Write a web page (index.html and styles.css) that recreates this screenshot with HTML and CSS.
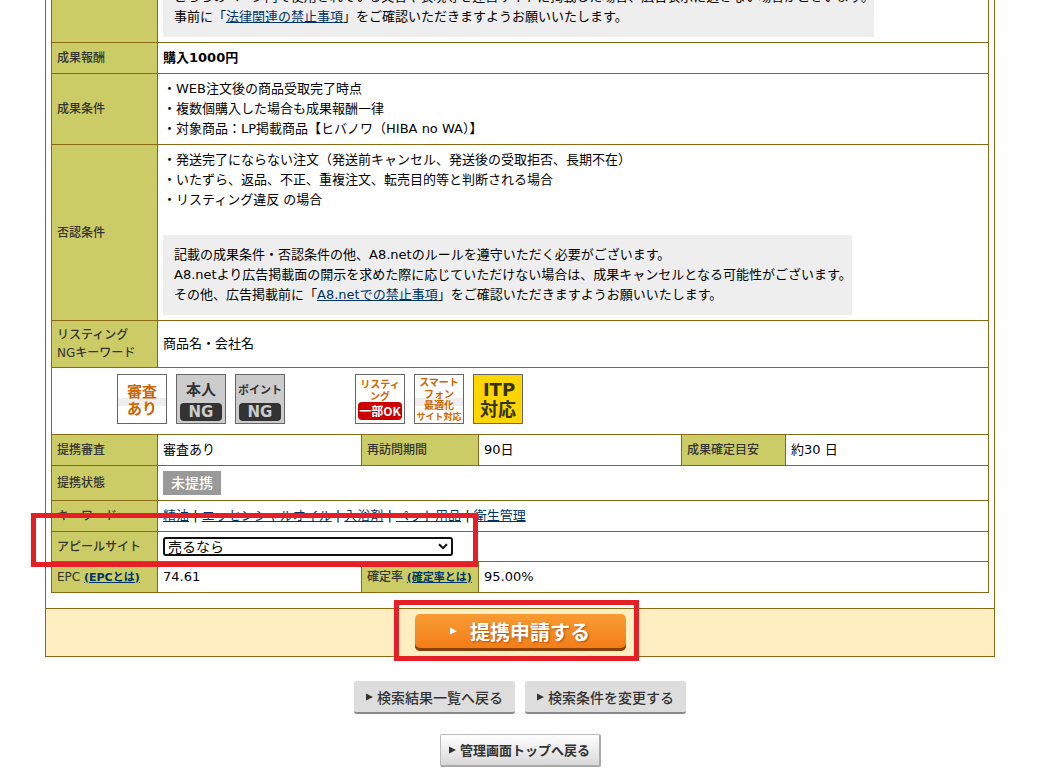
FILE: index.html
```html
<!DOCTYPE html>
<html lang="ja">
<head>
    <meta charset="UTF-8">
    <meta name="viewport" content="width=device-width, initial-scale=1.0">
    <title>プログラム詳細</title>
    <link rel="stylesheet" href="styles.css">
</head>
<body>
    <main class="container">
        <form class="program">
            <div class="program-body">
                <table class="detail">
                    <colgroup>
                        <col class="col-label">
                        <col class="col-value">
                        <col class="col-label-mid">
                        <col>
                        <col class="col-label-end">
                        <col>
                    </colgroup>
                    <tbody>
                        <tr>
                            <th></th>
                            <td colspan="5">
                                <p class="note">こちらのページ内で使用されている文言や表現等を運営サイトに掲載した場合、広告表示に適さない場合がございます。<br>
                                事前に「<a href="#">法律関連の禁止事項</a>」をご確認いただきますようお願いいたします。</p>
                            </td>
                        </tr>
                        <tr>
                            <th>成果報酬</th>
                            <td colspan="5"><strong>購入1000円</strong></td>
                        </tr>
                        <tr>
                            <th>成果条件</th>
                            <td colspan="5">
                                ・WEB注文後の商品受取完了時点<br>
                                ・複数個購入した場合も成果報酬一律<br>
                                ・対象商品：LP掲載商品【ヒバノワ（HIBA no WA）】
                            </td>
                        </tr>
                        <tr>
                            <th>否認条件</th>
                            <td colspan="5">
                                ・発送完了にならない注文（発送前キャンセル、発送後の受取拒否、長期不在）<br>
                                ・いたずら、返品、不正、重複注文、転売目的等と判断される場合<br>
                                ・リスティング違反 の場合
                                <p class="note note-below">記載の成果条件・否認条件の他、A8.netのルールを遵守いただく必要がございます。<br>
                                A8.netより広告掲載面の開示を求めた際に応じていただけない場合は、成果キャンセルとなる可能性がございます。<br>
                                その他、広告掲載前に「<a href="#">A8.netでの禁止事項</a>」をご確認いただきますようお願いいたします。</p>
                            </td>
                        </tr>
                        <tr>
                            <th>リスティング<br>NGキーワード</th>
                            <td colspan="5">商品名・会社名</td>
                        </tr>
                        <tr>
                            <td colspan="6" class="marks">
                                <div class="mark-list">
                                    <svg class="mark mark-orange" viewBox="0 0 50 50">
                                        <rect class="mark-frame" x="0.5" y="0.5" width="49" height="49"/>
                                        <rect class="mark-shade" x="1" y="24" width="48" height="8"/>
                                        <text class="t15" x="25" y="23">審査</text>
                                        <text class="t15" x="25" y="40">あり</text>
                                    </svg>
                                    <svg class="mark mark-gray" viewBox="0 0 50 50">
                                        <rect class="mark-frame" x="0.5" y="0.5" width="49" height="49"/>
                                        <text class="t15" x="25" y="21">本人</text>
                                        <rect class="mark-plate" x="4" y="29" width="42" height="18" rx="4"/>
                                        <text class="ng" x="25" y="43">NG</text>
                                    </svg>
                                    <svg class="mark mark-gray" viewBox="0 0 50 50">
                                        <rect class="mark-frame" x="0.5" y="0.5" width="49" height="49"/>
                                        <text class="t11" x="25" y="20">ポイント</text>
                                        <rect class="mark-plate" x="4" y="29" width="42" height="18" rx="4"/>
                                        <text class="ng" x="25" y="43">NG</text>
                                    </svg>
                                    <svg class="mark mark-orange mark-second" viewBox="0 0 50 50">
                                        <rect class="mark-frame" x="0.5" y="0.5" width="49" height="49"/>
                                        <text class="t10" x="25" y="14">リスティ</text>
                                        <text class="t10" x="25" y="26">ング</text>
                                        <rect class="mark-red" x="3" y="28" width="44" height="18" rx="4"/>
                                        <text class="ok" x="25" y="42">一部OK</text>
                                    </svg>
                                    <svg class="mark mark-orange" viewBox="0 0 50 50">
                                        <rect class="mark-frame" x="0.5" y="0.5" width="49" height="49"/>
                                        <rect class="mark-shade" x="1" y="24" width="48" height="8"/>
                                        <text class="t10" x="25" y="12">スマート</text>
                                        <text class="t10" x="25" y="24">フォン</text>
                                        <text class="t10" x="25" y="35">最適化</text>
                                        <text class="t9" x="25" y="46">サイト対応</text>
                                    </svg>
                                    <svg class="mark mark-yellow" viewBox="0 0 50 50">
                                        <rect class="mark-frame" x="0.5" y="0.5" width="49" height="49"/>
                                        <text class="itp" x="26" y="22">ITP</text>
                                        <text class="t18" x="25" y="42">対応</text>
                                    </svg>
                                </div>
                            </td>
                        </tr>
                        <tr>
                            <th>提携審査</th>
                            <td>審査あり</td>
                            <th>再訪問期間</th>
                            <td>90日</td>
                            <th>成果確定目安</th>
                            <td>約30 日</td>
                        </tr>
                        <tr>
                            <th>提携状態</th>
                            <td colspan="5"><span class="status">未提携</span></td>
                        </tr>
                        <tr>
                            <th>キーワード</th>
                            <td colspan="5"><a href="#">精油</a> | <a href="#">エッセンシャルオイル</a> | <a href="#">入浴剤</a> | <a href="#">ペット用品</a> | <a href="#">衛生管理</a></td>
                        </tr>
                        <tr>
                            <th><label for="appeal-site">アピールサイト</label></th>
                            <td colspan="5">
                                <div class="site-select">
                                    <select id="appeal-site">
                                        <option>売るなら</option>
                                    </select>
                                    <svg class="chevron" viewBox="0 0 10 7"><path d="M1 1.2 5 5.2 9 1.2"/></svg>
                                    <span class="marker marker-site"></span>
                                </div>
                            </td>
                        </tr>
                        <tr>
                            <th>EPC <a class="help" href="#">(EPCとは)</a></th>
                            <td>74.61</td>
                            <th>確定率 <a class="help" href="#">(確定率とは)</a></th>
                            <td colspan="3">95.00%</td>
                        </tr>
                    </tbody>
                </table>
            </div>
            <div class="apply-bar">
                <div class="apply">
                    <button type="button" class="apply-btn">
                        <svg class="arrow" viewBox="0 0 8 8"><path d="M0 0 8 4 0 8z"/></svg>提携申請する
                    </button>
                    <span class="marker marker-apply"></span>
                </div>
            </div>
        </form>
        <nav class="back-nav">
            <a class="back-btn" href="#"><svg class="arrow" viewBox="0 0 8 8"><path d="M0 0 8 4 0 8z"/></svg>検索結果一覧へ戻る</a>
            <a class="back-btn" href="#"><svg class="arrow" viewBox="0 0 8 8"><path d="M0 0 8 4 0 8z"/></svg>検索条件を変更する</a>
        </nav>
        <nav class="top-nav">
            <a class="top-btn" href="#"><svg class="arrow" viewBox="0 0 8 8"><path d="M0 0 8 4 0 8z"/></svg>管理画面トップへ戻る</a>
        </nav>
    </main>
</body>
</html>
```
FILE: styles.css
```css
body {
    margin: 0;
    padding: 0;
    font-family: "DejaVu Sans", "Noto Sans CJK JP", sans-serif;
    font-size: 13px;
    line-height: 20px;
    color: #000;
    background-color: #fff;
    overflow: hidden;
}

a {
    color: #003366;
}

/* the page is scrolled down to the lower half of the detail table */
.container {
    margin: -35px 44px 0 45px;
}

.program {
    border: 1px solid #8a6914;
}

.program-body {
    padding: 5px 5px 15px;
}

.detail {
    width: 100%;
    table-layout: fixed;
    border-collapse: collapse;
}

.col-label {
    width: 106px;
}

.col-value {
    width: 204px;
}

.col-label-mid {
    width: 117px;
}

.col-label-end {
    width: 104px;
}

.detail th,
.detail td {
    padding: 5px;
    border: 1px solid #8a6914;
    text-align: left;
    vertical-align: middle;
}

.detail th {
    background-color: #cccc66;
    color: #333;
    font-size: 12px;
    font-weight: 500;
    line-height: 18px;
    white-space: nowrap;
}

.note {
    width: fit-content;
    margin: 0;
    padding: 10px 0 10px 11px;
    background-color: #eee;
    white-space: nowrap;
}

.note-below {
    margin-top: 25px;
}

.help {
    font-size: 11px;
    font-weight: bold;
}

.detail .marks {
    padding: 6px 5px 10px 65px;
}

.mark-list {
    display: flex;
    gap: 9px;
}

.mark {
    display: block;
    width: 50px;
    height: 50px;
    font-family: "Noto Sans CJK JP", sans-serif;
    font-weight: bold;
    text-anchor: middle;
}

.mark-second {
    margin-left: 61px;
}

.mark-frame {
    fill: #fff;
    stroke: #666;
}

.mark-shade {
    fill: #eee;
}

.mark-orange {
    fill: #cc6600;
}

.mark-gray {
    fill: #333;
}

.mark-gray .mark-frame {
    fill: #ccc;
}

.mark-yellow {
    fill: #333300;
}

.mark-yellow .mark-frame {
    fill: #ffd500;
}

.mark-plate {
    fill: #333;
}

.mark-red {
    fill: #cc0000;
}

.t9 {
    font-size: 9px;
}

.t10 {
    font-size: 10px;
}

.t11 {
    font-size: 11px;
}

.t15 {
    font-size: 15px;
}

.t18 {
    font-size: 18px;
}

.ng {
    font-size: 15px;
    font-family: "DejaVu Sans", sans-serif;
    fill: #ccc;
}

.ok {
    font-size: 12px;
    fill: #fff;
}

.itp {
    font-size: 18px;
    font-family: "DejaVu Sans", sans-serif;
}

.status {
    display: block;
    width: fit-content;
    padding: 2px 8px;
    background-color: #999;
    color: #fff;
    font-size: 14px;
    font-weight: 500;
}

.site-select {
    position: relative;
    width: 290px;
}

.site-select select {
    display: block;
    box-sizing: border-box;
    width: 100%;
    height: 19px;
    padding: 0 20px 0 3px;
    border: 2px solid #101010;
    border-radius: 3px;
    background-color: #fff;
    color: #000;
    font-family: "Noto Sans CJK JP", sans-serif;
    font-size: 14px;
    line-height: 15px;
    appearance: none;
}

.chevron {
    position: absolute;
    top: 6px;
    right: 5px;
    width: 10px;
    height: 7px;
    fill: none;
    stroke: #101010;
    stroke-width: 2;
    pointer-events: none;
}

/* red frames around the two places to operate */
.marker {
    position: absolute;
    border: 5px solid #e61e25;
    pointer-events: none;
}

.marker-site {
    top: -24px;
    right: -25px;
    bottom: -11px;
    left: -132px;
}

.marker-apply {
    top: -14px;
    right: -13px;
    bottom: -10px;
    left: -21px;
}

.apply-bar {
    display: flex;
    justify-content: center;
    padding: 5px 0;
    border-top: 1px solid #8a6914;
    background-color: #ffeec1;
}

.apply {
    position: relative;
}

.arrow {
    width: 7px;
    height: 8px;
    fill: currentColor;
}

.apply-btn {
    display: flex;
    align-items: center;
    justify-content: center;
    gap: 13px;
    width: 211px;
    height: 37px;
    padding: 0 0 3px;
    border: none;
    border-radius: 5px;
    background: linear-gradient(#f79c32, #f47b16);
    box-shadow: inset 0 -3px 0 #8a3f06;
    color: #fff;
    font-family: "Noto Sans CJK JP", sans-serif;
    font-size: 20px;
    font-weight: bold;
    text-shadow: 1px 1px 2px #a85510;
    cursor: pointer;
}

.back-nav,
.top-nav {
    display: flex;
    justify-content: center;
    gap: 10px;
    font-family: "Noto Sans CJK JP", sans-serif;
}

.back-nav {
    margin-top: 24px;
}

.top-nav {
    margin-top: 20px;
}

.back-btn,
.top-btn {
    display: flex;
    align-items: center;
    justify-content: center;
    gap: 4px;
    box-sizing: border-box;
    width: 161px;
    height: 33px;
    color: #333;
    text-decoration: none;
}

.back-btn {
    border-bottom: 2px solid #888;
    border-radius: 3px;
    background-color: #ddd;
    font-size: 14px;
    font-weight: 500;
}

.top-btn {
    border: 1px solid #bbb;
    border-right: 2px solid #aaa;
    border-bottom: 2px solid #aaa;
    border-radius: 2px;
    background: linear-gradient(#fff, #d8d8d8);
    font-size: 13px;
    font-weight: bold;
}
```
